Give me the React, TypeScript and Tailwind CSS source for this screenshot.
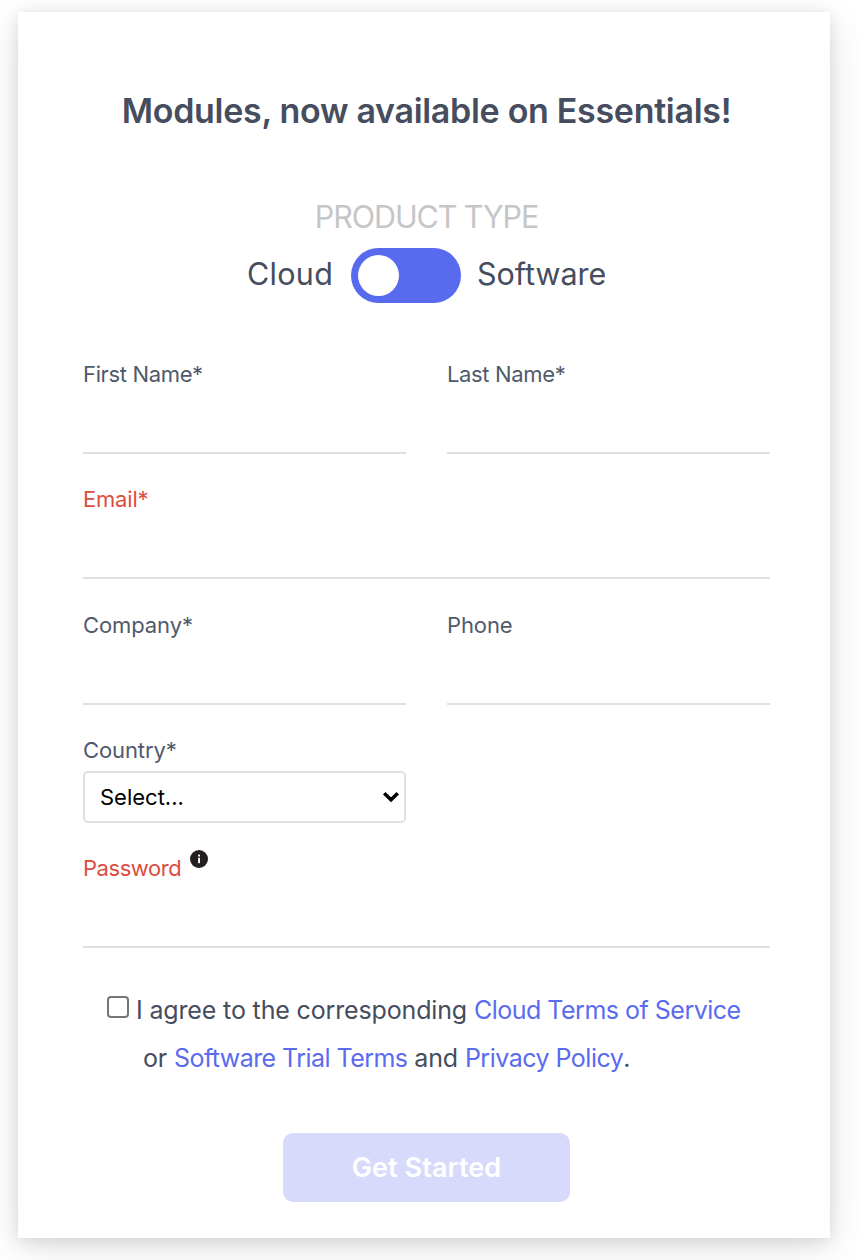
import React from "react";

type FieldProps = { label: string; tracking?: string; error?: boolean; info?: boolean };

function Field({ label, tracking = "tracking-[-0.1px]", error = false, info = false }: FieldProps) {
  return (
    <label className="block">
      <span
        className={`flex h-[30px] items-center gap-[9px] whitespace-nowrap text-[22px] leading-[30px] ${tracking} ${
          error ? "text-[#dc4d41]" : "text-[#505a6b]"
        }`}
      >
        {label}
        {info && (
          <svg viewBox="0 0 18 18" className="mb-[18px] size-[18px] shrink-0">
            <circle cx="9" cy="9" r="9" fill="#231f20" />
            <rect x="8.1" y="4.6" width="1.9" height="1.9" fill="#fff" />
            <rect x="8.1" y="7.8" width="1.9" height="5.4" fill="#fff" />
          </svg>
        )}
      </span>
      <input className="block h-[65px] w-full border-b-2 border-[#e0e0e0] bg-transparent text-[22px] outline-none" />
    </label>
  );
}

export default function App() {
  return (
    <div className="h-[1260px] w-[858px] overflow-hidden bg-white px-[18px] pt-3 font-['Inter',sans-serif] text-[#454d5e]">
      <form className="h-[1226px] w-[812px] bg-white pl-[65px] pr-[60px] pt-[79px] shadow-[0_10px_40px_rgba(0,0,0,0.11),0_3px_14px_rgba(0,0,0,0.11)]">
        <h1 className="h-10 whitespace-nowrap text-center text-[34px] font-semibold leading-10 tracking-[-0.3px]">
          Modules, now available on Essentials!
        </h1>

        <div className="mt-[69px] h-[33px] whitespace-nowrap text-center text-[30.5px] leading-[33px] tracking-[-1.1px] text-[#c6c6c6]">
          PRODUCT TYPE
        </div>
        <div className="mt-[15px] flex h-[55px] items-center pl-[164px] text-[30.5px] leading-[50px]">
          <span className="mb-1 w-[104px] tracking-[0.3px]">Cloud</span>
          <button type="button" className="flex h-[55px] w-[110px] items-center rounded-full bg-[#586aee] pl-[7px]">
            <span className="size-[41px] rounded-full bg-white" />
          </button>
          <span className="mb-1 ml-4 tracking-[0px]">Software</span>
        </div>

        <div className="mt-14 grid grid-cols-2 gap-x-[41px]">
          <Field label="First Name*" tracking="tracking-[-0.35px]" />
          <Field label="Last Name*" tracking="tracking-[-0.35px]" />
        </div>
        <div className="mt-[30px]">
          <Field label="Email*" tracking="tracking-[-0.2px]" error />
        </div>
        <div className="mt-[31px] grid grid-cols-2 gap-x-[41px]">
          <Field label="Company*" />
          <Field label="Phone" />
        </div>

        <div className="mt-[30px] w-[323px]">
          <div className="h-[30px] text-[22px] leading-[30px] tracking-[-0.1px] text-[#505a6b]">Country*</div>
          <button
            type="button"
            className="mt-[6px] flex h-[52px] w-full items-center justify-between rounded-[5px] border-2 border-[#e0e0e0] pl-[15px] pr-[5px] text-[22px] text-black"
          >
            <span className="mt-px">Select...</span>
            <svg viewBox="0 0 16 12" className="h-3 w-4" fill="none" stroke="#000" strokeWidth="3.6">
              <path d="M1.2 2.2 L8 8.8 L14.8 2.2" />
            </svg>
          </button>
        </div>

        <div className="mt-[30px]">
          <Field label="Password" tracking="tracking-[-0.45px]" error info />
        </div>

        <div className="mt-[38px] whitespace-nowrap text-[25px] leading-[48px] tracking-[-0.15px]">
          <div className="flex h-12 items-center pl-6">
            <span className="mb-[6px] mr-[7px] size-[22px] rounded-[4px] border-2 border-[#767676] bg-white" />
            <span>
              I agree to the corresponding{" "}
              <a className="tracking-[-0.5px] text-[#5b6bf0]">Cloud Terms of Service</a>
            </span>
          </div>
          <div className="h-12 pl-[60px]">
            or <a className="tracking-[-0.55px] text-[#5b6bf0]">Software Trial Terms</a> and{" "}
            <a className="tracking-[-0.5px] text-[#5b6bf0]">Privacy Policy</a>.
          </div>
        </div>

        <button
          type="button"
          className="ml-[200px] mt-[51px] block h-[69px] w-[287px] rounded-[10px] bg-[#d8dafb] pt-[2px] text-[27px] font-semibold tracking-[0.1px] text-white"
        >
          Get Started
        </button>
      </form>
    </div>
  );
}
